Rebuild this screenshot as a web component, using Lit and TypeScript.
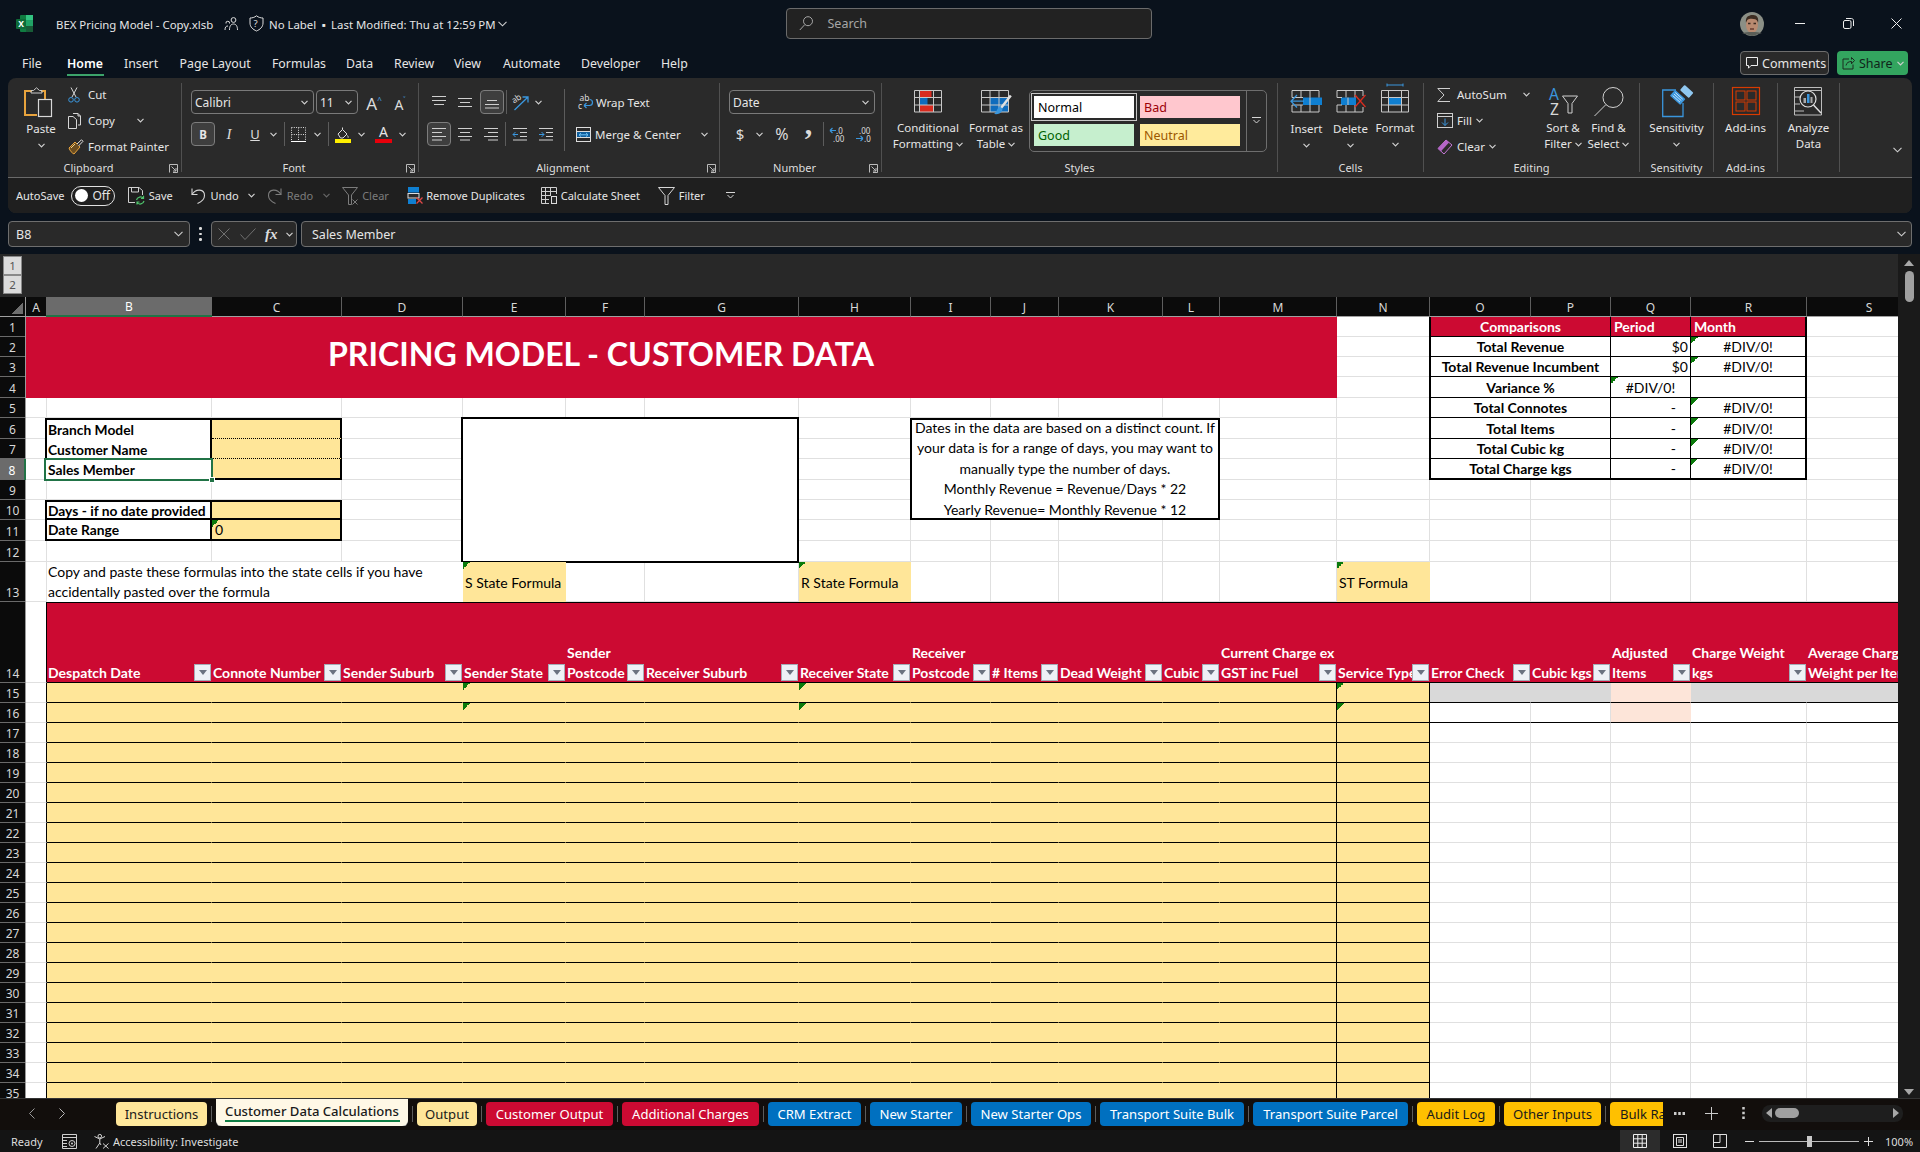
import { LitElement, html, css, svg } from 'lit';
import { customElement } from 'lit/decorators.js';

const BL = '#3a96dd';
const RD = '#d92b1f';
const sv = (w: number, h: number, b: unknown) => html`<svg class="ic" width=${w} height=${h} viewBox="0 0 ${w} ${h}">${b}</svg>`;
const sp = (n: number) => html`<i class="sp" style="width:${n}px"></i>`;
const t = (s: string, w: number, cls = '') => html`<span class="fw ${cls}" style="width:${w}px">${s}</span>`;
const chev = sv(7, 5, svg`<path d="M.5 .8 3.5 3.8 6.5 .8" stroke-width="1.2"/>`);
const chevDim = sv(7, 5, svg`<path d="M.5 .8 3.5 3.8 6.5 .8" stroke="#666" stroke-width="1.2"/>`);
const chevL = sv(9, 6, svg`<path d="M.5 .8 4.5 4.8 8.5 .8" stroke-width="1.1"/>`);
const vsep = html`<i class="vsep"></i>`;
const launcher = sv(9, 9, svg`<path d="M.5 8.5V.5H8.5V8.5H4M2.5 2.5 7 7M7 4V7H4" stroke="#bbb"/>`);
const lines = (rows: number[][], w = 15, h = 15) => sv(w, h, rows.map(r => svg`<path d="M${r[0]} ${r[2]}H${r[1]}"/>`));

const I = {
  excel: sv(17, 17, svg`<rect x="4" y="0" width="13" height="17" rx="1" fill="#107c41" stroke="none"/><rect x="10" y="0" width="7" height="5.5" fill="#33c481" stroke="none"/><rect x="10" y="5.5" width="7" height="5.5" fill="#21a366" stroke="none"/><rect x="10" y="11" width="7" height="6" fill="#185c37" stroke="none"/><rect x="0" y="4" width="10" height="10" rx="1" fill="#0e6b38" stroke="none"/><text x="2.2" y="12" font-size="8.5" font-weight="700" fill="#fff">X</text>`),
  people: sv(14, 14, svg`<circle cx="9.5" cy="3" r="2.4" stroke="#ddd"/><path d="M5.5 13C5.5 9 7 7 9.5 7S13.5 9 13.5 13M1 13C1 10 2 9 4 9M2 6.5A1.8 1.8 0 1 1 5.5 6.5" stroke="#ddd"/>`),
  shield: sv(15, 17, svg`<path d="M7.5 .8C9.5 2.5 12 3 14 3V8C14 12 11 14.5 7.5 16 4 14.5 1 12 1 8V3C3 3 5.5 2.5 7.5 .8Z" stroke="#ddd"/><text x="4.6" y="11.5" font-size="9.5" fill="#ddd">?</text>`),
  search: sv(14, 15, svg`<circle cx="9" cy="5.2" r="4.5" stroke="#a6a6a6"/><path d="M5.8 8.6 .8 14" stroke="#a6a6a6"/>`),
  avatar: sv(24, 24, svg`<circle cx="12" cy="12" r="12" fill="#8b8f86" stroke="none"/><path d="M6 11C5 5 9 3 13 3S19 6 18 11L16.5 8H8Z" fill="#3d2d22" stroke="none"/><ellipse cx="12" cy="13" rx="6" ry="8" fill="#b98a70" stroke="none"/><path d="M6.5 8.5C8 6 16 6 17.5 9L17 5 12 3 7 5Z" fill="#3d2d22" stroke="none"/><path d="M8 11.5H10.5M13.5 11.5H16" stroke="#3a2a20" stroke-width="1.4"/><path d="M10 17H14" stroke="#5c2f28" stroke-width="1.3"/><path d="M2 21C6 19.5 18 19.5 22 21L12 24Z" fill="#5a5e58" stroke="none"/>`),
  min: sv(10, 1, svg`<path d="M0 .5H10" stroke="#eee"/>`),
  restore: sv(11, 11, svg`<rect x=".5" y="2.5" width="7.5" height="8" rx="1.5" stroke="#eee"/><path d="M3 .5H8.5C9.5 .5 10.5 1.5 10.5 2.5V8" stroke="#eee"/>`),
  close: sv(11, 11, svg`<path d="M.5 .5 10.5 10.5M10.5 .5 .5 10.5" stroke="#eee"/>`),
  comment: sv(12, 12, svg`<path d="M.5 .5H11.5V8.5H5L2.5 11.2V8.5H.5Z" stroke="#eee"/>`),
  share: sv(13, 13, svg`<path d="M7 2H1V12H11V7.5" stroke="#1c2a20"/><path d="M4 8.5C4.5 5.5 7 4.5 9.5 4.5V6.8L12.5 3.5 9.5 .5V2.5" stroke="#1c2a20"/>`),
  paste: sv(34, 33, svg`<path d="M8 4H1V28H13" stroke="#e8a33d" stroke-width="2"/><path d="M17 4H21V12" stroke="#e8a33d" stroke-width="2"/><path d="M7 6V3.5H9.5L12.5 .8 15.5 3.5H18V6Z" stroke="#c9c9c9"/><rect x="14.5" y="12.5" width="13" height="17" fill="#2a2a2a" stroke="#d8d8d8" stroke-width="1.2"/>`),
  cut: sv(12, 16, svg`<path d="M3 .5 8 10M9 .5 4 10" stroke="#d6d6d6"/><circle cx="3" cy="12.8" r="2.3" stroke="${BL}"/><circle cx="9" cy="12.8" r="2.3" stroke="${BL}"/>`),
  copy: sv(16, 16, svg`<path d="M5 .5H10L12.5 3V12H10" stroke="#d6d6d6"/><path d="M.5 3.5H5L8.5 6.5V15.5H.5Z" stroke="#d6d6d6"/><path d="M10 .5V3H12.5" stroke="#d6d6d6"/>`),
  painter: sv(16, 16, svg`<path d="M1 9 7 3 12 8 6 15C4 14 2 12 1 9Z" stroke="#e8a33d" fill="#6b4d20"/><path d="M9 5 13.5 .8 15 2.3 10.5 7" stroke="#e0e0e0" fill="#2a2a2a"/><path d="M3 9 7 5" stroke="#f2d38b"/>`),
  borders: sv(15, 15, svg`<path d="M.5 .5H14.5V14M.5 .5V14M7.5 .5V14M.5 7.5H14.5" stroke="#ddd" stroke-dasharray="1 1.3"/><path d="M0 14.5H15" stroke="#fff"/>`),
  fill: sv(16, 17, svg`<path d="M3 8 7.5 3.5 12 8 8 12 5.5 12Z" stroke="#ddd"/><path d="M7.5 3.5V1.5M12.5 9.5C13 10.5 13.5 11 13 11.8" stroke="#ddd"/><rect x="0" y="13" width="16" height="4" fill="#ffef00" stroke="none"/>`),
  orient: sv(17, 17, svg`<text x="0" y="7" font-size="8.5" fill="#ddd" transform="rotate(-35 5 7)">ab</text><path d="M1.5 16 15 3M9.5 3H15V8.5" stroke="${BL}" stroke-width="1.3"/>`),
  wrap: sv(15, 17, svg`<text x="1.5" y="7" font-size="8.5" fill="#ddd">ab</text><text x="0" y="15" font-size="8.5" fill="#ddd">c</text><path d="M6 11.5H11.5C15.5 11.5 15.5 5.5 11.5 5.5M6 11.5 8.5 9M6 11.5 8.5 14" stroke="${BL}" stroke-width="1.2"/>`),
  merge: sv(15, 15, svg`<rect x=".5" y=".5" width="14" height="14" stroke="#ddd"/><rect x="1" y="5" width="13" height="5.5" fill="#0f5e9c" stroke="none"/><path d="M.5 4.5H14.5M.5 10.5H14.5" stroke="#ddd"/><path d="M3 7.8H12M3 7.8 5 6M3 7.8 5 9.6M12 7.8 10 6M12 7.8 10 9.6" stroke="#6cc0f5"/>`),
  decL: sv(15, 17, svg`<text x="6" y="7.5" font-size="8" fill="#ddd">.0</text><text x="3" y="15.5" font-size="8" fill="#ddd">.00</text><path d="M0 4.5H6M0 4.5 2.5 2M0 4.5 2.5 7" stroke="${BL}" stroke-width="1.2"/>`),
  decR: sv(15, 17, svg`<text x="3" y="7.5" font-size="8" fill="#ddd">.00</text><text x="8" y="15.5" font-size="8" fill="#ddd">.0</text><path d="M0 12.5H7M7 12.5 4.5 10M7 12.5 4.5 15" stroke="${BL}" stroke-width="1.2"/>`),
  cf: sv(28, 33, svg`<rect x="5.5" y="3.5" width="12" height="7" fill="${RD}" stroke="none"/><rect x="5.5" y="10.5" width="8" height="7.5" fill="#0f6cbd" stroke="none"/><rect x="5.5" y="18" width="14" height="7" fill="${RD}" stroke="none"/><path d="M.5 3.5H27.5V25H.5ZM.5 10.5H27.5M.5 18H27.5M5.5 3.5V25M19.5 3.5V25" stroke="#c8c8c8"/>`),
  table: sv(31, 33, svg`<rect x="9" y="10.5" width="18" height="14.5" fill="#0f6cbd" stroke="none"/><path d="M.5 3.5H27.5V25H.5ZM.5 10.5H27.5M.5 18H27.5M9 3.5V25M18 3.5V25" stroke="#c8c8c8"/><path d="M29.8 8.5 20 21" stroke="#e0e0e0" stroke-width="2.5"/><path d="M18 20C21 20 22 22 21 24 19.5 27 16 27.5 13 27 15 26 16 22 18 20Z" fill="${BL}" stroke="none"/>`),
  insert: sv(31, 33, svg`<rect x="12" y="10.5" width="19" height="7.5" fill="#0f7fd1" stroke="none"/><path d="M1 10.5V3.5H28V10.5M1 18V25H28V18M10 3.5V10.5M19 3.5V10.5M10 18V25M19 18V25M1 10.5H12M1 18H12M19 10.5V18" stroke="#c8c8c8"/><path d="M0 14.2H13M6 8 0 14.2 6 20.5" stroke="${BL}" stroke-width="1.3"/>`),
  del: sv(30, 33, svg`<rect x="5" y="10.5" width="15" height="7.5" fill="#0f7fd1" stroke="none"/><path d="M1 10.5V3.5H27V9M1 18V25H27V20M10 3.5V10.5M19 3.5V10.5M10 18V25M19 18V25M1 10.5H6M1 18H6M12 10.5V18" stroke="#c8c8c8"/><path d="M19 8 29.5 20M29.5 8 19 20" stroke="${RD}" stroke-width="1.3"/>`),
  format: sv(28, 33, svg`<path d="M6 -2H22M6 -3.5V-.5M22 -3.5V-.5" stroke="${BL}"/><rect x="7.5" y="10.5" width="13" height="7.5" fill="#0f7fd1" stroke="none"/><path d="M.5 3.5H27.5V25H.5ZM.5 10.5H27.5M.5 18H27.5M7.5 3.5V25M20.5 3.5V25" stroke="#c8c8c8"/>`),
  sum: sv(13, 14, svg`<path d="M13 .5H.8L7 7 .8 13.5H13" stroke="#cfcfcf"/>`),
  fillD: sv(16, 15, svg`<rect x=".5" y=".5" width="15" height="14" stroke="#cfcfcf"/><path d="M.5 3.5H15.5" stroke="#cfcfcf"/><path d="M8 5.5V12.5M5 9.5 8 12.5 11 9.5" stroke="${BL}"/>`),
  eraser: sv(16, 16, svg`<path d="M1 9.5 9 1 15 6 7 15Z" stroke="#c678d8"/><path d="M1 9.5 9 1 12 3.5 4 12.2Z" fill="#b565c9" stroke="none"/>`),
  sort: sv(29, 33, svg`<text x="0" y="12.5" font-size="15.5" fill="${BL}">A</text><text x="1" y="27.5" font-size="15.5" fill="#d8d8d8">Z</text><path d="M13.5 9H28.5L23 16.5V26H19V16.5Z" stroke="#d0d0d0"/>`),
  find: sv(29, 33, svg`<circle cx="19" cy="10.5" r="10" stroke="#d0d0d0"/><path d="M12 17.5 .5 29" stroke="#d0d0d0"/>`),
  sens: sv(28, 33, svg`<path d="M14 3H.7V29.5H21V16" stroke="${BL}" stroke-width="1.3"/><g transform="rotate(42 16 10)"><rect x="9" y="6.5" width="14" height="8" rx="1" fill="${BL}" stroke="none"/><path d="M11 8.5H21M11 10.5H21M11 12.5H21" stroke="#dbeefc" stroke-width=".8"/></g><g transform="rotate(42 22 6)"><rect x="17" y="-.5" width="12" height="7" rx="1" fill="#8fc7f0" stroke="none"/></g>`),
  addins: sv(28, 33, svg`<rect x=".5" y=".5" width="27" height="27" stroke="#d83b01" stroke-width="1.2"/><rect x="4" y="4" width="9" height="9" stroke="#d83b01"/><rect x="15" y="4" width="9" height="9" stroke="#d83b01"/><rect x="4" y="15" width="9" height="9" stroke="#d83b01"/><rect x="15" y="15" width="9" height="9" stroke="#d83b01"/>`),
  analyze: sv(28, 33, svg`<path d="M.5 .5H27.5V28H.5ZM.5 3.5H27.5M.5 10H6M.5 17H6M.5 24H10" stroke="#bdbdbd"/><circle cx="14" cy="12" r="8" stroke="#e0e0e0" stroke-width="1.2"/><path d="M19.5 18 27 26" stroke="#e0e0e0" stroke-width="1.4"/><rect x="9.5" y="11" width="2.5" height="5" fill="#a9a9a9" stroke="none"/><rect x="13" y="7" width="2.5" height="9" fill="${BL}" stroke="none"/><rect x="16.5" y="10" width="2" height="6" fill="#a9a9a9" stroke="none"/>`),
  save: sv(17, 18, svg`<path d="M.5 .5H11L14.5 3.5V8M7 15.5H.5V.5M3.5 .5V5H10.5V.5" stroke="#d0d0d0"/><path d="M8.5 13A4 4 0 0 1 15.5 11.5M16 14A4 4 0 0 1 9 15.5M15.5 8.8V11.5H13M9 17.5V15H11.5" stroke="#4ec36b" stroke-width="1.2"/>`),
  undo: sv(14, 17, svg`<path d="M1 7.5C5 1 13.5 2 13.5 8.5 13.5 12 10 15 6.5 16.5" stroke="#d6d6d6" stroke-width="1.1"/><path d="M1 1.5V7.5H6.5" stroke="#d6d6d6" stroke-width="1.1"/>`),
  redo: sv(14, 17, svg`<path d="M13 7.5C9 1 .5 2 .5 8.5 .5 12 4 15 7.5 16.5" stroke="#7c7c7c" stroke-width="1.1"/><path d="M13 1.5V7.5H7.5" stroke="#7c7c7c" stroke-width="1.1"/>`),
  clear: sv(16, 18, svg`<path d="M.5 .5H15.5L9.5 8V17.5H6.5V8Z" stroke="#7c7c7c"/><path d="M10.5 12.5 15.5 17.5M15.5 12.5 10.5 17.5" stroke="#7c7c7c"/>`),
  dupes: sv(15, 17, svg`<rect x="0" y="0" width="11" height="5.5" fill="#0f7fd1" stroke="none"/><rect x="0" y="6.5" width="11" height="4.5" fill="#2a2a2a" stroke="#ddd"/><rect x="0" y="12" width="8" height="5" fill="#0f7fd1" stroke="none"/><path d="M8.5 10.5 14.5 16.5M14.5 10.5 8.5 16.5" stroke="#e04848" stroke-width="1.3"/>`),
  calc: sv(16, 17, svg`<path d="M8 16.5H.5V.5H15.5V7M.5 4.5H15.5M.5 8.5H10M.5 12.5H8M4.5 .5V16.5M9.5 .5V8" stroke="#cfcfcf"/><rect x="10.5" y="9.5" width="5" height="7" fill="#2a2a2a" stroke="#dcdcdc"/>`),
  funnel: sv(17, 18, svg`<path d="M.5 .5H16.5L10 8.5V17.5H7V8.5Z" stroke="#d6d6d6"/>`),
  more: sv(9, 7, svg`<path d="M0 .5H9M1.5 3 4.5 6 7.5 3" stroke="#d6d6d6"/>`),
  statusMacro: sv(15, 15, svg`<path d="M.5 .5H14.5V14.5H.5ZM.5 3.5H14.5M.5 6.5H5M.5 9.5H5M.5 12.5H5" stroke="#d0d0d0"/><circle cx="10" cy="9.5" r="3" stroke="#d0d0d0"/><circle cx="10" cy="9.5" r="1" fill="#d0d0d0" stroke="none"/>`),
  access: sv(15, 15, svg`<circle cx="5.8" cy="2.2" r="1.8" stroke="#d6d6d6"/><path d="M.5 2.5 5.8 5 11 2.5M5.8 5V9L2 14.5M5.8 9 7 11" stroke="#d6d6d6"/><path d="M9 9.5 14.5 14.5M14.5 9.5 9 14.5" stroke="#d6d6d6"/>`),
  viewGrid: sv(14, 14, svg`<path d="M.5 .5H13.5V13.5H.5ZM.5 4.8H13.5M.5 9.2H13.5M4.8 .5V13.5M9.2 .5V13.5" stroke="#eee"/>`),
  viewPage: sv(14, 14, svg`<rect x=".5" y=".5" width="13" height="13" stroke="#e0e0e0"/><path d="M3.5 3.5H10.5V11.5H3.5ZM5 6H9M5 8H9" stroke="#e0e0e0"/>`),
  viewBreak: sv(14, 14, svg`<path d="M.5 .5H13.5V13.5H.5ZM.5 8.5H7V.5" stroke="#e0e0e0"/>`),
};

const T = { y: '#ffe699', r: '#cc0a32', b: '#0070c0', a: '#ffc000' };
const TABS: { n: string; c: string; w: number; dark?: boolean; active?: boolean }[] = [
  { n: 'Instructions', c: T.y, w: 91, dark: true },
  { n: 'Customer Data Calculations', c: '#fff8e6', w: 192, dark: true, active: true },
  { n: 'Output', c: T.y, w: 60, dark: true },
  { n: 'Customer Output', c: T.r, w: 127 },
  { n: 'Additional Charges', c: T.r, w: 137 },
  { n: 'CRM Extract', c: T.b, w: 93 },
  { n: 'New Starter', c: T.b, w: 92 },
  { n: 'New Starter Ops', c: T.b, w: 120 },
  { n: 'Transport Suite Bulk', c: T.b, w: 144 },
  { n: 'Transport Suite Parcel', c: T.b, w: 155 },
  { n: 'Audit Log', c: T.a, w: 78, dark: true },
  { n: 'Other Inputs', c: T.a, w: 97, dark: true },
  { n: 'Bulk Rates', c: T.a, w: 80, dark: true },
];

const CW = [21, 165, 130, 121, 103, 79, 154, 112, 80, 68, 104, 57, 117, 93, 101, 80, 80, 116, 125];
const RH = [20, 20, 20, 21, 20, 21, 20, 21, 20, 20, 21, 21, 40, 81, ...Array(21).fill(20)];
const COLS = 'ABCDEFGHIJKLMNOPQRS'.split('');
const HEAD: string[][] = [
  ['Despatch Date'], ['Connote Number'], ['Sender Suburb'], ['Sender State'], ['Sender', 'Postcode'], ['Receiver Suburb'], ['Receiver State'],
  ['Receiver', 'Postcode'], ['# Items'], ['Dead Weight'], ['Cubic'], ['Current Charge ex', 'GST inc Fuel'], ['Service Type'], ['Error Check'], ['Cubic kgs'],
  ['Adjusted', 'Items'], ['Charge Weight', 'kgs'], ['Average Charge', 'Weight per Item'],
];
const CMP: [string, string, string, boolean, boolean][] = [
  ['Total Revenue', '$0', '#DIV/0!', false, true],
  ['Total Revenue Incumbent', '$0', '#DIV/0!', false, true],
  ['Variance %', '#DIV/0!', '', true, false],
  ['Total Connotes', '-', '#DIV/0!', false, true],
  ['Total Items', '-', '#DIV/0!', false, true],
  ['Total Cubic kg', '-', '#DIV/0!', false, true],
  ['Total Charge kgs', '-', '#DIV/0!', false, true],
];
// area helper: col index (A=0), row number (1-based), spans
const at = (c: number, r: number, cs = 1, rs = 1) => `grid-column:${c + 2}/span ${cs};grid-row:${r + 1}/span ${rs}`;

function baseClass(r: number, c: number) {
  const k: string[] = ['c'];
  if (r === 14 && c === 0) k.push('blr');
  if (r >= 15) {
    if (c === 0) k.push('blr');
    else if (c <= 13) { k.push('yel'); if (c >= 12) k.push('blr'); }
    else {
      if (r === 15) k.push(c === 16 ? 'peach' : 'gray');
      if (r === 16) { k.push('blb'); if (c === 16) k.push('peach'); }
    }
  }
  return k.join(' ');
}

@customElement('app-root')
export class AppRoot extends LitElement {
  static styles = css`
    :host { display: block; width: 1920px; height: 1152px; overflow: hidden; background: #0a121c; color: #e6e6e6; font-family: "Noto Sans", "Open Sans", sans-serif; font-size: 11.5px; }
    * { box-sizing: border-box; }
    .ic { fill: none; stroke: #cfcfcf; stroke-width: 1; overflow: visible; flex: none; display: block; font-family: "Noto Sans", sans-serif; }
    .ic text { stroke: none; }
    .sp { display: block; flex: none; }
    .fw { display: block; flex: none; white-space: nowrap; }
    .vsep { display: block; width: 1px; height: 24px; background: #5c5c5c; flex: none; }
    .dim { color: #7c7c7c; }

    .title { height: 47px; padding: 0 0 0 15.5px; display: flex; align-items: center; font-size: 11.4px; }
    .title .fw { padding-top: 1px; }
    .search { width: 366px; height: 31px; border: 1px solid #6b6b6b; border-radius: 4px; background: #222; display: flex; align-items: center; padding-left: 12px; color: #a6a6a6; gap: 14px; font-size: 12.5px; }
    .menu { height: 31px; display: flex; align-items: flex-start; padding-left: 22px; }
    .tabs-m { display: grid; grid-template-columns: 45px 57px 55.6px 92.4px 74px 48px 60px 49px 78px 80px auto; height: 31px; font-size: 12.3px; align-items: center; }
    .tabs-m span { height: 31px; line-height: 33px; white-space: nowrap; }
    .tabs-m .on { font-weight: 600; color: #fff; }
    .tabs-m .on::after { content: ""; display: block; width: 37px; height: 2px; background: #3ca36a; margin-top: -6px; }
    .m-btns { margin-left: auto; display: flex; gap: 8px; padding: 4px 12px 0 0; }
    .mbtn { height: 24px; border-radius: 4px; display: flex; align-items: center; gap: 4px; font-size: 12.5px; }
    .comments { width: 89px; border: 1px solid #6e6e6e; background: #2a2a2a; padding-left: 5px; }
    .share { width: 71px; background: #33a55f; color: #10241a; padding-left: 5px; }

    .ribbon { margin: 0 8px; height: 135px; background: #2a2a2a; border-radius: 8px; display: flex; flex-direction: column; overflow: hidden; }
    .rtop { height: 100px; padding-top: 5px; border-bottom: 1px solid #6a6a6a; display: grid; grid-template-columns: 174px 237px 301px 162px 396px 146px 216px 74px 64px 62px 1fr; }
    .group { height: 89px; border-right: 1px solid #505050; display: flex; flex-direction: column; }
    .g-nob { border-right: none; }
    .gc { height: 77px; display: flex; flex: none; }
    .glabel { height: 16px; line-height: 16px; text-align: center; font-size: 11px; display: grid; grid-template-columns: 1fr auto; align-items: center; color: #dedede; flex: none; }
    .glabel > span { grid-column: 1; grid-row: 1; }
    .glabel > .ic { grid-column: 2; grid-row: 1; margin-right: 3px; }
    .pad-clip { padding-left: 13px; gap: 7px; }
    .big { display: flex; flex-direction: column; align-items: center; padding-top: 4px; line-height: 16px; text-align: center; flex: none; white-space: nowrap; }
    .slot { height: 33px; flex: none; display: block; }
    .dn .slot { height: 34px; }
    .big .txt { display: flex; align-items: center; gap: 3px; justify-content: center; height: 16px; }
    .stack { display: flex; flex-direction: column; gap: 1px; flex: none; margin-top: -1px; }
    .srow { height: 25px; display: flex; align-items: center; white-space: nowrap; }
    .sicon { width: 20px; flex: none; display: block; }
    .two { display: flex; flex-direction: column; padding-top: 7px; gap: 8px; flex: none; }
    .row2 { height: 24px; display: flex; align-items: center; white-space: nowrap; }
    .combo { height: 24px; border: 1px solid #7a7a7a; border-radius: 4px; background: #2a2a2a; display: flex; align-items: center; justify-content: space-between; padding: 0 5px 0 3px; flex: none; font-size: 12px; }
    .tbtn { width: 24px; height: 24px; border: 1px solid #7d7d7d; border-radius: 4px; background: #3e3e3e; display: flex; align-items: center; justify-content: center; flex: none; }
    .glyph { display: block; text-align: center; flex: none; font-size: 14px; line-height: 24px; color: #dcdcdc; }
    .gA { font-size: 17px; }
    .caret { font-size: 8px; color: #4aa8e8; vertical-align: 7px; }
    .under { text-decoration: underline; font-size: 13px; }
    .ital { font-family: "Liberation Serif", serif; font-style: italic; font-size: 15px; }
    .comma { width: 8px; font-weight: 700; font-size: 30px; line-height: 4px; height: 24px; font-family: "Liberation Serif", serif; }
    .colorA { display: flex; flex-direction: column; align-items: stretch; flex: none; height: 18px; }
    .colorA span { font-size: 14px; line-height: 14px; text-align: center; }
    .colorA i { height: 4px; background: #e8000b; display: block; }
    .bigsep { width: 1px; height: 62px; background: #5c5c5c; margin: 6px 0 0; flex: none; }
    .gallery { width: 238px; height: 62px; margin-top: 7px; border: 1px solid #6e6e6e; border-radius: 5px; display: grid; grid-template-columns: 100px 100px 1fr; grid-template-rows: 22px 22px; gap: 6px; padding: 5px 0 0 4px; flex: none; font-size: 12.5px; }
    .st { display: flex; align-items: center; padding-left: 4px; }
    .st-n { background: #fff; color: #000; outline: 1px solid #c8c8c8; outline-offset: 2px; }
    .st-b { background: #ffc7ce; color: #9c0006; }
    .st-g { background: #c6efce; color: #006100; }
    .st-u { background: #ffeb9c; color: #9c5700; }
    .gscroll { grid-column: 3; grid-row: 1/span 2; margin: -5px 0 -6px 0; border-left: 1px solid #6e6e6e; display: flex; align-items: center; justify-content: center; padding-bottom: 2px; }
    .qat { flex: 1; background: #1f1f1f; display: flex; align-items: center; padding-left: 8px; font-size: 11px; }
    .toggle { width: 44px; height: 20px; border: 1.5px solid #e0e0e0; border-radius: 10px; display: flex; align-items: center; padding-left: 3px; gap: 4px; flex: none; font-size: 12px; }
    .toggle b { width: 13px; height: 13px; border-radius: 50%; background: #fff; display: block; }
    .expand { align-self: flex-end; margin: 0 0 7px 53px; }

    .fbar { height: 26px; margin-top: 8px; padding: 0 8px; display: flex; font-size: 12.5px; }
    .fbox { border: 1px solid #6e6e6e; border-radius: 4px; background: #292929; height: 26px; display: flex; align-items: center; flex: none; }
    .namebox { width: 182px; padding: 0 6px 0 7px; justify-content: space-between; }
    .dots { width: 21px; display: flex; flex-direction: column; align-items: center; justify-content: center; gap: 3px; flex: none; }
    .dots i { width: 2.5px; height: 2.5px; background: #ddd; border-radius: 50%; display: block; }
    .fxbox { width: 86px; padding-left: 6px; margin-right: 4px; }
    .fx { font-family: "Liberation Serif", serif; font-style: italic; font-weight: 700; font-size: 15px; color: #ddd; width: 16px; flex: none; }
    .fml { flex: 1; padding: 0 5px 0 10px; justify-content: space-between; }

    .sheet { height: 844px; margin-top: 7px; display: flex; }
    .smain { width: 1898px; display: flex; flex-direction: column; flex: none; }
    .outline { height: 43px; background: #282828; padding: 2px 0 0 3px; flex: none; }
    .olb { width: 19px; height: 19px; background: #dcdcdc; border: 1px solid #8a8a8a; color: #555; font-size: 11.5px; display: flex; align-items: center; justify-content: center; }
    .grid { width: 1898px; height: 801px; overflow: hidden; display: grid; background: #fff; font-family: Lato, sans-serif; font-size: 14px; color: #000; }
    .vbar { flex: 1; background: #1a1a1a; display: flex; flex-direction: column; align-items: center; padding-top: 6px; }
    .vup { width: 0; height: 0; border: 5px solid transparent; border-top: none; border-bottom: 6px solid #a8a8a8; }
    .vthumb { width: 9px; height: 31px; border-radius: 5px; background: #a0a0a0; margin-top: 5px; }
    .vdown { width: 0; height: 0; border: 5px solid transparent; border-bottom: none; border-top: 6px solid #a8a8a8; margin-top: auto; margin-bottom: 3px; }

    .ch, .rh, .corner { background: #0b0b0b; color: #d8d8d8; font-family: "Noto Sans", sans-serif; font-size: 12px; display: flex; align-items: center; justify-content: center; }
    .ch { border-right: 1px solid #5e5e5e; border-bottom: 1px solid #a0a0a0; padding-top: 1px; }
    .ch.sel { background: #6b6b6b; color: #fff; border-bottom: 2px solid #217346; border-right: none; margin-left: -1px; }
    .rh { border-right: 1px solid #9a9a9a; box-shadow: inset 0 -1px 0 #6a6a6a; align-items: flex-end; line-height: 19px; }
    .rh.sel { background: #6b6b6b; color: #fff; border-right: 2px solid #217346; }
    .corner { border-right: 1px solid #9a9a9a; border-bottom: 1px solid #a0a0a0; justify-content: flex-end; align-items: flex-end; padding: 0 2px 2px 0; }
    .tri-c { width: 12px; height: 12px; background: linear-gradient(135deg, transparent 50%, #6e6e6e 50%); }
    .c { border-right: 1px solid #e0e0e0; border-bottom: 1px solid #e0e0e0; background: #fff; min-width: 0; min-height: 0; }
    .c.blr { border-right-color: #000; }
    .c.yel { background: #ffe699; border-right-color: transparent; border-bottom-color: #000; }
    .c.yel.blr { border-right-color: #000; }
    .c.gray { background: #d9d9d9; border-right-color: transparent; border-bottom-color: #000; }
    .c.peach { background: #fde5d9; border-right-color: transparent; border-bottom-color: #000; }
    .c.blb { border-bottom-color: #000; }

    .o { display: flex; align-items: center; white-space: nowrap; min-width: 0; min-height: 0; overflow: hidden; background: #fff; }
    .titlec { background: #cc0a32; color: #fff; font-weight: 700; font-size: 32.1px; padding-left: 302px; padding-bottom: 9px; }
    .lab { font-weight: 700; font-size: 13.8px; padding-left: 1px; margin-left: -2px; border-left: 2px solid #000; border-right: 2px solid #000; }
    .inp { background: #ffe699; border-right: 2px solid #000; }
    .bt { border-top: 2px solid #000; }
    .bb { border-bottom: 2px solid #000; }
    .dotb { border-bottom: 1px dotted #000; }
    .tg { background-image: linear-gradient(135deg, #0b7a0b 50%, transparent 50%); background-repeat: no-repeat; background-size: 7px 7px; }
    .selc { outline: 2px solid #217346; outline-offset: -1px; position: relative; overflow: visible; z-index: 2; border: none; padding-left: 3px; margin-left: -2px; font-weight: 700; font-size: 13.8px; }
    .handle { position: absolute; right: -3px; bottom: -3px; width: 6px; height: 6px; background: #217346; border: 1px solid #fff; }
    .inner0 { padding-left: 3px; }
    .bigbox { border: 2px solid #000; margin: -1px 0 -1px -2px; }
    .note { border: 2px solid #000; flex-direction: column; justify-content: center; line-height: 20.4px; text-align: center; margin-left: -1px; }
    .copy { align-items: flex-start; white-space: normal; padding: 0 0 0 1px; line-height: 20px; background: #fff; }
    .form { background-color: #ffe699; padding-left: 2px; }
    .hc { background: #cc0a32; color: #fff; font-weight: 700; border-top: 1px solid #000; border-bottom: 1px solid #000; align-items: flex-end; padding: 0 1px 1px 1px; line-height: 20px; }
    .hc .ht { flex: 1 1 0; min-width: 0; margin-bottom: -2px; }
    .fb { width: 17px; height: 17px; flex: none; background: #eef1f6; border: 1px solid #a5adb8; display: flex; align-items: center; justify-content: center; }
    .fb i { width: 0; height: 0; border: 4px solid transparent; border-bottom: none; border-top: 5px solid #6b7280; }
    .t-c { justify-content: center; font-weight: 700; margin-left: -1px; border-left: 2px solid #000; border-right: 1px solid #000; border-bottom: 1px solid #000; }
    .t-q { border-right: 1px solid #000; border-bottom: 1px solid #000; padding: 0 2px; justify-content: flex-end; }
    .t-dash { padding-right: 14px; }
    .t-qc { justify-content: center; }
    .t-r { border-right: 2px solid #000; border-bottom: 1px solid #000; justify-content: center; }
    .t-head { background: #cc0a32; color: #fff; font-weight: 700; }
    .t-left { justify-content: flex-start; padding-left: 3px; }
    .last { border-bottom-width: 2px; }
    .tabbar { height: 32px; background: #120e0c; border-top: 1px solid #333; display: flex; align-items: flex-start; }
    .nav { width: 116px; flex: none; height: 28px; display: flex; align-items: center; padding-left: 29px; gap: 24px; }
    .tabs { width: 1547px; flex: none; display: flex; overflow: hidden; align-items: flex-start; padding-top: 3px; }
    .tab { height: 24px; border-radius: 4px; flex: none; display: flex; justify-content: center; align-items: center; font-size: 13.1px; color: #fff; white-space: nowrap; overflow: hidden; }
    .tab.d { color: #1a1a1a; }
    .tab.first-clip { justify-content: flex-start; padding-left: 10px; }
    .tab.act { height: 28px; margin-top: -4px; border-radius: 0 0 6px 6px; flex-direction: column; font-weight: 500; box-shadow: 0 1px 0 #999; }
    .tab.act u { display: block; text-decoration: none; }
    .tab.act i { display: block; width: 175px; height: 2px; background: #107c41; margin-top: 0; }
    .tsep { width: 1px; height: 16px; background: #5c5c5c; margin: 4px 4px 0; flex: none; }
    .tctl { flex: 1; height: 28px; display: flex; align-items: center; color: #ccc; }
    .hs { width: 141px; height: 17px; border-radius: 8px; background: #1e1e1e; display: flex; align-items: center; padding: 0 4px; flex: none; }
    .hs-l { width: 0; height: 0; border: 5px solid transparent; border-left: none; border-right: 6px solid #a8a8a8; }
    .hs-t { width: 24px; height: 10px; border-radius: 5px; background: #a0a0a0; margin-left: 3px; }
    .hs-r { width: 0; height: 0; border: 5px solid transparent; border-right: none; border-left: 6px solid #a8a8a8; margin-left: auto; }
    .status { height: 22px; background: #141414; display: flex; align-items: center; padding-left: 11px; font-size: 11px; color: #ddd; }
    .vwbtn { width: 40px; height: 22px; flex: none; display: flex; align-items: center; justify-content: center; }
    .vwbtn.on { background: #2c2c2c; }
    .slider { width: 100px; height: 1px; background: #bbb; display: flex; align-items: center; justify-content: center; flex: none; }
    .slider i { width: 5px; height: 11px; background: #c8c8c8; display: block; }
  `;

  private renderSheet() {
    const cols = `26px ${CW.map(w => w + 'px').join(' ')}`;
    const rows = `20px ${RH.map(h => h + 'px').join(' ')}`;
    const cells = [];
    for (let r = 1; r <= 35; r++) for (let c = 0; c < 19; c++) cells.push(html`<div class=${baseClass(r, c)} style=${at(c, r)}></div>`);
    return html`<div class="grid" style="grid-template-columns:${cols};grid-template-rows:${rows}">
      <div class="corner" style="grid-column:1;grid-row:1"><i class="tri-c"></i></div>
      ${COLS.map((n, i) => html`<div class="ch ${i === 1 ? 'sel' : ''}" style="grid-column:${i + 2};grid-row:1">${n}</div>`)}
      ${RH.map((_, i) => html`<div class="rh ${i === 7 ? 'sel' : ''}" style="grid-column:1;grid-row:${i + 2}">${i + 1}</div>`)}
      ${cells}

      <div class="o titlec" style=${at(0, 1, 13, 4)}>PRICING MODEL - CUSTOMER DATA</div>

      <div class="o lab bt" style=${at(1, 6)}>Branch Model</div>
      <div class="o inp bt dotb" style=${at(2, 6)}></div>
      <div class="o lab" style=${at(1, 7)}>Customer Name</div>
      <div class="o inp dotb" style=${at(2, 7)}></div>
      <div class="o inp bb" style=${at(2, 8)}></div>
      <div class="o selc" style=${at(1, 8)}>Sales Member<i class="handle"></i></div>

      <div class="o lab bt bb" style=${at(1, 10)}>Days - if no date provided</div>
      <div class="o inp bt bb" style=${at(2, 10)}></div>
      <div class="o lab bb" style=${at(1, 11)}>Date Range</div>
      <div class="o inp bb tg inner0" style=${at(2, 11)}>0</div>

      <div class="o bigbox" style=${at(4, 6, 3, 7)}></div>
      <div class="o note" style=${at(8, 6, 4, 5)}>
        <span>Dates in the data are based on a distinct count. If</span>
        <span>your data is for a range of days, you may want to</span>
        <span>manually type the number of days.</span>
        <span>Monthly Revenue = Revenue/Days * 22</span>
        <span>Yearly Revenue= Monthly Revenue * 12</span>
      </div>

      <div class="o t-c t-head" style=${at(14, 1, 2)}>Comparisons</div>
      <div class="o t-q t-head t-left" style=${at(16, 1)}>Period</div>
      <div class="o t-r t-head t-left" style=${at(17, 1)}>Month</div>
      ${CMP.map((row, i) => {
        const r = i + 2;
        const l = i === 6 ? 'last' : '';
        return html`
          <div class="o t-c ${l}" style=${at(14, r, 2)}>${row[0]}</div>
          <div class="o t-q ${l} ${row[3] ? 't-qc tg' : ''} ${row[1] === '-' ? 't-dash' : ''}" style=${at(16, r)}>${row[1]}</div>
          <div class="o t-r ${l} ${row[4] ? 'tg' : ''}" style=${at(17, r)}>${row[2]}</div>`;
      })}

      <div class="o copy" style=${at(1, 13, 3)}>Copy and paste these formulas into the state cells if you have accidentally pasted over the formula</div>
      <div class="o form tg" style=${at(4, 13)}>S State Formula</div>
      <div class="o form tg" style=${at(7, 13)}>R State Formula</div>
      <div class="o form tg" style=${at(13, 13)}>ST Formula</div>

      ${HEAD.map((h, i) => html`<div class="o hc" style=${at(i + 1, 14)}><div class="ht">${h.map(l => html`<div>${l}</div>`)}</div><div class="fb"><i></i></div></div>`)}
      ${[4, 7, 13].flatMap(c => [15, 16].map(r => html`<div class="tg" style=${at(c, r)}></div>`))}
    </div>`;
  }

  render() {
    return html`
      <div class="title">
        ${I.excel}${sp(23.5)}${t('BEX Pricing Model - Copy.xlsb', 159.5)}${sp(8.5)}${I.people}${sp(11)}${I.shield}${sp(5)}
        ${t('No Label', 46.5)}${sp(6)}${t('▪', 9.6)}${t('Last Modified: Thu at 12:59 PM', 161.4)}${sp(6)}${chevL}
        ${sp(279)}
        <div class="search">${I.search}<span>Search</span></div>
        ${sp(588)}${I.avatar}${sp(31)}${I.min}${sp(38)}${I.restore}${sp(37)}${I.close}
      </div>

      <div class="menu">
        <div class="tabs-m">
          <span>File</span><span class="on">Home</span><span>Insert</span><span>Page Layout</span><span>Formulas</span><span>Data</span><span>Review</span><span>View</span><span>Automate</span><span>Developer</span><span>Help</span>
        </div>
        <div class="m-btns">
          <div class="mbtn comments">${I.comment}<span>Comments</span></div>
          <div class="mbtn share">${I.share}<span>Share</span>${chev}</div>
        </div>
      </div>

      <div class="ribbon">
        <div class="rtop">
          <!-- Clipboard -->
          <div class="group">
            <div class="gc pad-clip">
              <div class="big dn" style="width:40px"><span class="slot">${I.paste}</span><span class="txt">Paste</span><span class="txt">${chev}</span></div>
              <div class="stack">
                <div class="srow"><span class="sicon">${I.cut}</span>Cut</div>
                <div class="srow"><span class="sicon">${I.copy}</span>Copy${sp(22)}${chev}</div>
                <div class="srow"><span class="sicon">${I.painter}</span>Format Painter</div>
              </div>
            </div>
            <div class="glabel"><span>Clipboard</span>${launcher}</div>
          </div>
          <!-- Font -->
          <div class="group">
            <div class="gc" style="padding-left:9px">
              <div class="two">
                <div class="row2">
                  <div class="combo" style="width:122.5px">Calibri${chev}</div>${sp(2.5)}
                  <div class="combo" style="width:42px">11${chev}</div>${sp(8)}
                  <span class="glyph gA" style="width:16px">A<span class="caret">^</span></span>${sp(11)}
                  <span class="glyph" style="width:14px">A<span class="caret">˅</span></span>
                </div>
                <div class="row2">
                  <div class="tbtn"><b>B</b></div>${sp(9)}
                  <span class="glyph ital" style="width:10px">I</span>${sp(16)}
                  <span class="glyph under" style="width:10px">U</span>${sp(10)}${chev}${sp(7)}${vsep}${sp(6)}
                  ${I.borders}${sp(8)}${chev}${sp(7)}${vsep}${sp(6)}
                  ${I.fill}${sp(7)}${chev}${sp(10)}
                  <div class="colorA" style="width:17px"><span>A</span><i></i></div>${sp(7)}${chev}
                </div>
              </div>
            </div>
            <div class="glabel"><span>Font</span>${launcher}</div>
          </div>
          <!-- Alignment -->
          <div class="group">
            <div class="gc">
              <div class="two" style="width:145px">
                <div class="row2">
                  ${sp(13)}${lines([[0, 14, 1.5], [0, 14, 5.5], [2, 12, 9.5]], 14, 14)}${sp(12)}
                  ${lines([[0, 14, 3.5], [2, 12, 7.5], [0, 14, 11.5]], 14, 14)}${sp(7.5)}
                  <div class="tbtn">${lines([[2, 12, 5.5], [0, 14, 9.5], [0, 14, 13]], 14, 14)}</div>${sp(2)}${vsep}${sp(6)}${I.orient}${sp(5)}${chev}
                </div>
                <div class="row2">
                  ${sp(8)}<div class="tbtn">${lines([[0, 14, 1.5], [0, 10, 5.5], [0, 14, 9.5], [0, 10, 13]], 14, 14)}</div>${sp(7)}
                  ${lines([[0, 14, 1.5], [2, 12, 5.5], [0, 14, 9.5], [2, 12, 13]], 14, 14)}${sp(12)}
                  ${lines([[0, 14, 1.5], [4, 14, 5.5], [0, 14, 9.5], [4, 14, 13]], 14, 14)}${sp(7)}${vsep}${sp(7)}
                  ${sv(14, 14, svg`<path d="M0 1.5H14M7 5.5H14M7 9.5H14M0 13H14"/><path d="M5 7.5H0M0 7.5 2.5 5M0 7.5 2.5 10" stroke="${BL}"/>`)}${sp(12)}
                  ${sv(14, 14, svg`<path d="M0 1.5H14M7 5.5H14M7 9.5H14M0 13H14"/><path d="M0 7.5H5M5 7.5 2.5 5M5 7.5 2.5 10" stroke="${BL}"/>`)}
                </div>
              </div>
              <i class="bigsep"></i>${sp(11)}
              <div class="two">
                <div class="row2">${sp(2)}${I.wrap}${sp(3)}Wrap Text</div>
                <div class="row2">${I.merge}${sp(4)}${t('Merge & Center', 106)}${chev}</div>
              </div>
            </div>
            <div class="glabel"><span>Alignment</span>${launcher}</div>
          </div>
          <!-- Number -->
          <div class="group">
            <div class="gc" style="padding-left:9px">
              <div class="two">
                <div class="row2"><div class="combo" style="width:146px">Date${chev}</div></div>
                <div class="row2">
                  ${sp(6)}<span class="glyph" style="width:10px;font-size:15px">$</span>${sp(10.5)}${chev}${sp(11)}
                  <span class="glyph" style="width:17px;font-size:16px">%</span>${sp(14)}
                  <span class="glyph comma">,</span>${sp(10)}${vsep}${sp(6)}
                  ${I.decL}${sp(11)}${I.decR}
                </div>
              </div>
            </div>
            <div class="glabel"><span>Number</span>${launcher}</div>
          </div>
          <!-- Styles -->
          <div class="group">
            <div class="gc" style="padding-left:11px">
              <div class="big" style="width:70px"><span class="slot">${I.cf}</span><span class="txt">Conditional</span><span class="txt">Formatting ${chev}</span></div>
              <div class="big" style="width:66px"><span class="slot">${I.table}</span><span class="txt">Format as</span><span class="txt">Table ${chev}</span></div>
              <div class="gallery">
                <div class="st st-n">Normal</div><div class="st st-b">Bad</div>
                <div class="gscroll">${I.more}</div>
                <div class="st st-g">Good</div><div class="st st-u">Neutral</div>
              </div>
            </div>
            <div class="glabel"><span>Styles</span></div>
          </div>
          <!-- Cells -->
          <div class="group">
            <div class="gc" style="padding-left:7px">
              <div class="big dn" style="width:43px"><span class="slot">${I.insert}</span><span class="txt">Insert</span><span class="txt">${chev}</span></div>
              <div class="big dn" style="width:45px"><span class="slot">${I.del}</span><span class="txt">Delete</span><span class="txt">${chev}</span></div>
              <div class="big" style="width:44px"><span class="slot">${I.format}</span><span class="txt">Format</span><span class="txt">${chev}</span></div>
            </div>
            <div class="glabel"><span>Cells</span></div>
          </div>
          <!-- Editing -->
          <div class="group">
            <div class="gc" style="padding-left:13px">
              <div class="stack" style="width:104px">
                <div class="srow"><span class="sicon">${I.sum}</span>${t('AutoSum', 66)}${chev}</div>
                <div class="srow"><span class="sicon">${I.fillD}</span>Fill${sp(4)}${chev}</div>
                <div class="srow"><span class="sicon">${I.eraser}</span>Clear${sp(4)}${chev}</div>
              </div>
              <div class="big" style="width:44px"><span class="slot">${I.sort}</span><span class="txt">Sort &</span><span class="txt">Filter ${chev}</span></div>
              <div class="big" style="width:47px"><span class="slot">${I.find}</span><span class="txt">Find &</span><span class="txt">Select ${chev}</span></div>
            </div>
            <div class="glabel"><span>Editing</span></div>
          </div>
          <!-- Sensitivity -->
          <div class="group">
            <div class="gc" style="justify-content:center">
              <div class="big"><span class="slot">${I.sens}</span><span class="txt">Sensitivity</span><span class="txt">${chev}</span></div>
            </div>
            <div class="glabel"><span>Sensitivity</span></div>
          </div>
          <!-- Add-ins -->
          <div class="group">
            <div class="gc" style="justify-content:center">
              <div class="big"><span class="slot">${I.addins}</span><span class="txt">Add-ins</span></div>
            </div>
            <div class="glabel"><span>Add-ins</span></div>
          </div>
          <!-- Analyze -->
          <div class="group">
            <div class="gc" style="justify-content:center">
              <div class="big"><span class="slot">${I.analyze}</span><span class="txt">Analyze</span><span class="txt">Data</span></div>
            </div>
          </div>
          <div class="group g-nob">
            <div class="gc"><span class="expand">${chevL}</span></div>
          </div>
        </div>
        <div class="qat">
          ${t('AutoSave', 55.4)}
          <div class="toggle"><b></b><span>Off</span></div>${sp(13)}
          ${I.save}${sp(3.4)}${t('Save', 42)}
          ${I.undo}${sp(5.6)}${t('Undo', 37.9)}${chev}${sp(12.5)}
          ${I.redo}${sp(5)}${t('Redo', 36.5, 'dim')}${chevDim}${sp(11.5)}
          ${I.clear}${sp(4.4)}${t('Clear', 45.6, 'dim')}
          ${I.dupes}${sp(3.5)}${t('Remove Duplicates', 114.5)}
          ${I.calc}${sp(4)}${t('Calculate Sheet', 97)}
          ${I.funnel}${sp(4)}${t('Filter', 47)}${I.more}
        </div>
      </div>

      <div class="fbar">
        <div class="fbox namebox"><span>B8</span>${chevL}</div>
        <div class="dots"><i></i><i></i><i></i></div>
        <div class="fbox fxbox">
          ${sv(12, 12, svg`<path d="M.5 .5 11.5 11.5M11.5 .5 .5 11.5" stroke="#707070"/>`)}${sp(10)}
          ${sv(16, 12, svg`<path d="M.5 6.5 5 11.5 15.5 .5" stroke="#707070"/>`)}${sp(9)}
          <span class="fx">fx</span>${sp(5)}${chev}
        </div>
        <div class="fbox fml"><span>Sales Member</span>${chevL}</div>
      </div>

      <div class="sheet">
        <div class="smain">
          <div class="outline"><div class="olb">1</div><div class="olb">2</div></div>
          ${this.renderSheet()}
        </div>
        <div class="vbar"><i class="vup"></i><i class="vthumb"></i><i class="vdown"></i></div>
      </div>

      <div class="tabbar">
        <div class="nav">
          ${sv(6, 11, svg`<path d="M5.5 .5 .5 5.5 5.5 10.5" stroke="#9a9a9a"/>`)}
          ${sv(6, 11, svg`<path d="M.5 .5 5.5 5.5 .5 10.5" stroke="#b8b8b8"/>`)}
        </div>
        <div class="tabs">
          ${TABS.map((b, i) => html`
            <div class="tab ${b.dark ? 'd' : ''} ${b.active ? 'act' : ''} ${i === 12 ? 'first-clip' : ''}" style="width:${b.w}px;background:${b.c}">
              ${b.active ? html`<u>${b.n}</u><i></i>` : b.n}
            </div>
            ${i < TABS.length - 1 ? html`<i class="tsep"></i>` : ''}`)}
        </div>
        <div class="tctl">
          ${sp(11)}${sv(11, 3, svg`<path d="M0 1.5H11" stroke="#ccc" stroke-width="3" stroke-dasharray="2.5 1.75"/>`)}
          ${sp(20)}${sv(13, 13, svg`<path d="M6.5 0V13M0 6.5H13" stroke="#ccc"/>`)}
          ${sp(24)}${sv(3, 12, svg`<path d="M1.5 0V12" stroke="#ccc" stroke-width="2.5" stroke-dasharray="2.5 2.25"/>`)}
          ${sp(17)}
          <div class="hs"><i class="hs-l"></i><i class="hs-t"></i><i class="hs-r"></i></div>
        </div>
      </div>

      <div class="status">
        ${t('Ready', 51)}${I.statusMacro}${sp(17)}${I.access}${sp(4)}${t('Accessibility: Investigate', 123)}
        ${sp(1384)}
        <div class="vwbtn on">${I.viewGrid}</div>
        <div class="vwbtn">${I.viewPage}</div>
        <div class="vwbtn">${I.viewBreak}</div>
        ${sp(5)}
        ${sv(9, 1, svg`<path d="M0 .5H9" stroke="#ddd"/>`)}${sp(5)}
        <div class="slider"><i></i></div>${sp(5)}
        ${sv(9, 9, svg`<path d="M4.5 0V9M0 4.5H9" stroke="#ddd"/>`)}${sp(12)}
        <span>100%</span>
      </div>
    `;
  }
}
